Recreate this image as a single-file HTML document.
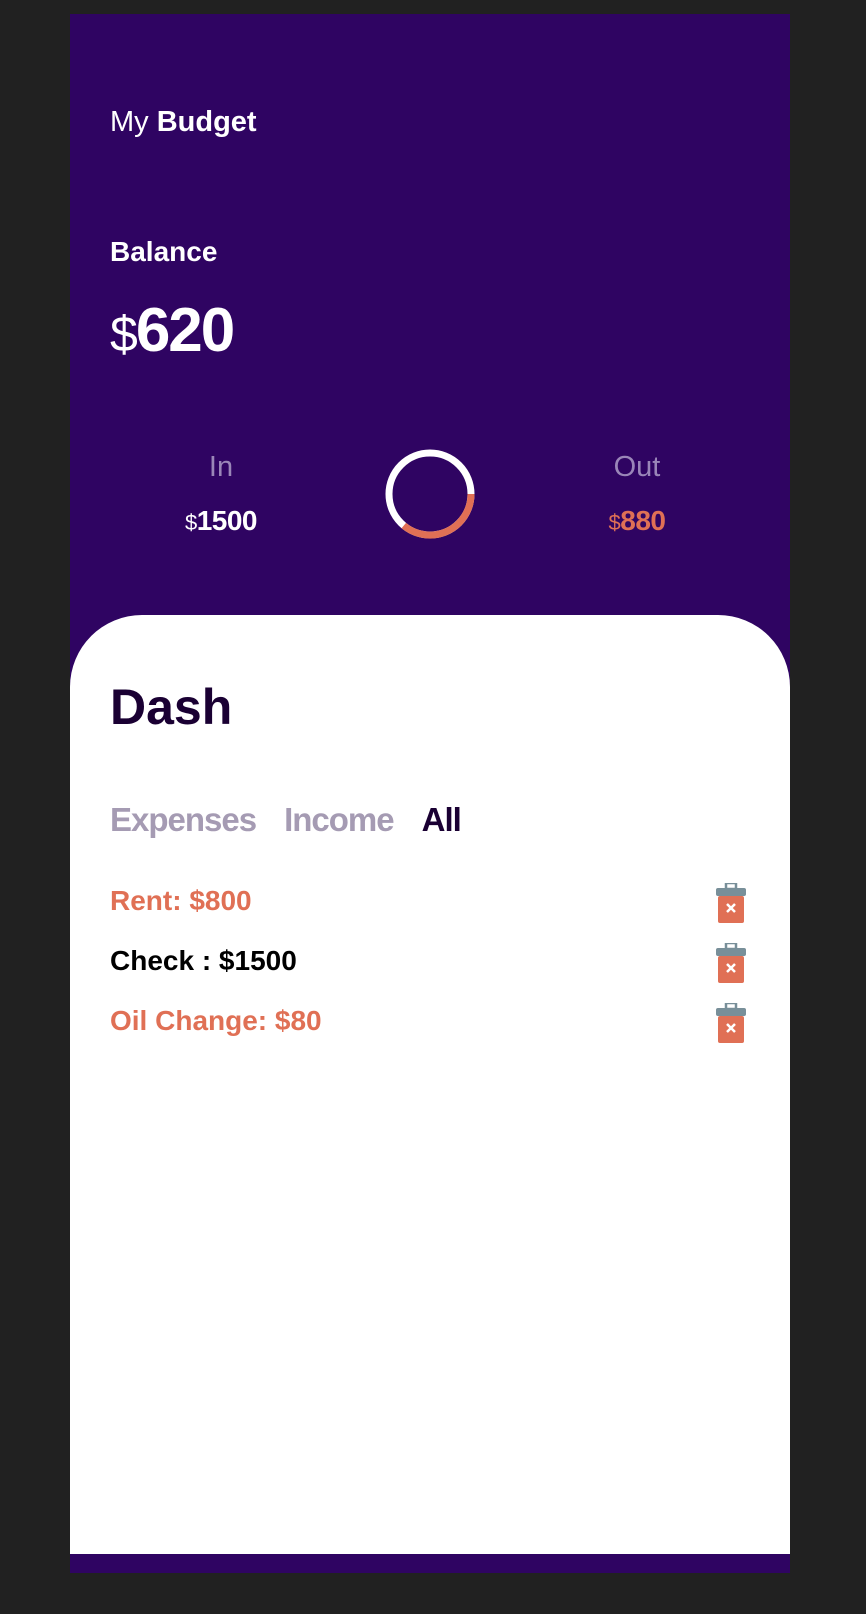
<!DOCTYPE html>
<html><head><meta charset="utf-8"><style>
html,body{margin:0;padding:0;background:#212121;width:866px;height:1614px;overflow:hidden;font-family:"Liberation Sans",sans-serif}
.panel{position:absolute;left:70px;top:14px;width:720px;height:1559px;background:#2f0462}
.t{position:absolute;white-space:nowrap;line-height:1}
.card{position:absolute;left:70px;top:615px;width:720px;height:939px;background:#fff;border-radius:72px 72px 0 0}
.or{color:#e07055}
.trash{position:absolute;left:716px;width:30px;height:40px}
</style></head><body>
<div class="panel"></div>
<div class="t" style="left:110px;top:108px;font-size:29px;color:#fff">My <b>Budget</b></div>
<div class="t" style="left:110px;top:238px;font-size:28px;color:#fff;font-weight:bold">Balance</div>
<div class="t" style="left:110px;top:300px;font-size:62px;color:#fff;letter-spacing:-2px"><span style="font-size:50px">$</span><b>620</b></div>
<div class="t" style="left:171px;width:100px;text-align:center;top:453px;font-size:29px;color:#9a86b8">In</div>
<div class="t" style="left:161px;width:120px;text-align:center;top:507px;font-size:28px;color:#fff;letter-spacing:-0.5px"><span style="font-size:22px">$</span><b>1500</b></div>
<div class="t" style="left:577px;width:120px;text-align:center;top:453px;font-size:29px;color:#9a86b8">Out</div>
<div class="t or" style="left:577px;width:120px;text-align:center;top:507px;font-size:28px;letter-spacing:-0.5px"><span style="font-size:22px">$</span><b>880</b></div>
<svg style="position:absolute;left:384px;top:448px" width="92" height="92" viewBox="0 0 92 92">
<circle cx="46" cy="46" r="41" fill="none" stroke="#fff" stroke-width="7"/>
<path d="M87 46 A41 41 0 0 1 19.8 77.6" fill="none" stroke="#e07055" stroke-width="7"/>
</svg>
<div class="card"></div>
<div class="t" style="left:110px;top:682px;font-size:50px;font-weight:bold;color:#1a0033">Dash</div>
<div class="t" style="left:110px;top:803px;font-size:33px;font-weight:bold;color:#a59bb3;letter-spacing:-1px">Expenses<span style="margin-left:28px">Income</span><span style="margin-left:28px;color:#1a0033">All</span></div>
<div class="t or" style="left:110px;top:887px;font-size:28px;font-weight:bold">Rent: $800</div>
<div class="t" style="left:110px;top:947px;font-size:28px;font-weight:bold;color:#000">Check : $1500</div>
<div class="t or" style="left:110px;top:1007px;font-size:28px;font-weight:bold">Oil Change: $80</div>
<svg class="trash" style="top:883px" viewBox="0 0 30 40"><rect x="10" y="0" width="10" height="6" fill="none" stroke="#788f99" stroke-width="2.5"/><rect x="0" y="5" width="30" height="8" rx="2" fill="#788f99"/><rect x="2" y="13" width="26" height="27" rx="2" fill="#e07055"/><path d="M11 21l8 8M19 21l-8 8" stroke="#fff" stroke-width="2.5"/></svg>
<svg class="trash" style="top:943px" viewBox="0 0 30 40"><rect x="10" y="0" width="10" height="6" fill="none" stroke="#788f99" stroke-width="2.5"/><rect x="0" y="5" width="30" height="8" rx="2" fill="#788f99"/><rect x="2" y="13" width="26" height="27" rx="2" fill="#e07055"/><path d="M11 21l8 8M19 21l-8 8" stroke="#fff" stroke-width="2.5"/></svg>
<svg class="trash" style="top:1003px" viewBox="0 0 30 40"><rect x="10" y="0" width="10" height="6" fill="none" stroke="#788f99" stroke-width="2.5"/><rect x="0" y="5" width="30" height="8" rx="2" fill="#788f99"/><rect x="2" y="13" width="26" height="27" rx="2" fill="#e07055"/><path d="M11 21l8 8M19 21l-8 8" stroke="#fff" stroke-width="2.5"/></svg>
</body></html>
